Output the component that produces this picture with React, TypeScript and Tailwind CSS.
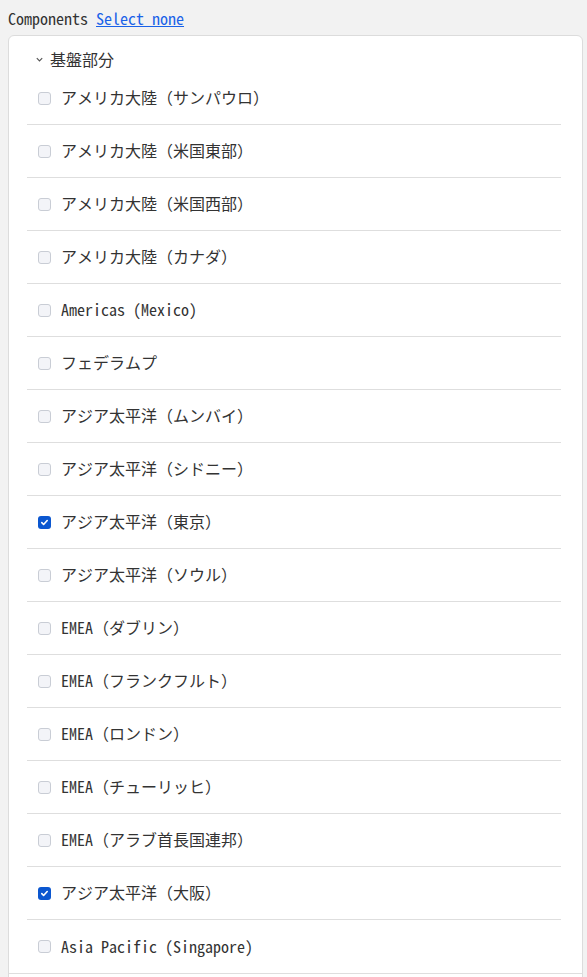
import { FC, JSX } from 'react';

const regions: { label: string; checked: boolean }[] = [
  { label: 'アメリカ大陸（サンパウロ）', checked: false },
  { label: 'アメリカ大陸（米国東部）', checked: false },
  { label: 'アメリカ大陸（米国西部）', checked: false },
  { label: 'アメリカ大陸（カナダ）', checked: false },
  { label: 'Americas (Mexico)', checked: false },
  { label: 'フェデラムプ', checked: false },
  { label: 'アジア太平洋（ムンバイ）', checked: false },
  { label: 'アジア太平洋（シドニー）', checked: false },
  { label: 'アジア太平洋（東京）', checked: true },
  { label: 'アジア太平洋（ソウル）', checked: false },
  { label: 'EMEA（ダブリン）', checked: false },
  { label: 'EMEA（フランクフルト）', checked: false },
  { label: 'EMEA（ロンドン）', checked: false },
  { label: 'EMEA（チューリッヒ）', checked: false },
  { label: 'EMEA（アラブ首長国連邦）', checked: false },
  { label: 'アジア太平洋（大阪）', checked: true },
  { label: 'Asia Pacific (Singapore)', checked: false },
];

const Box: FC<{ checked: boolean }> = ({ checked }): JSX.Element =>
  checked ? (
    <span className="flex h-[13px] w-[13px] shrink-0 items-center justify-center rounded-[3px] bg-[#0b57d0]">
      <svg width="9" height="9" viewBox="0 0 10 10" fill="none">
        <path d="M2 5.2l2 2 4-4.4" stroke="white" strokeWidth="1.8" strokeLinecap="round" strokeLinejoin="round" />
      </svg>
    </span>
  ) : (
    <span className="h-[13px] w-[13px] shrink-0 rounded-[3px] border border-[#c9cdd5] bg-[#f3f4f8]" />
  );

const App: FC = (): JSX.Element => {
  return (
    <div
      className="min-h-screen bg-[#f2f2f2] pl-2 pr-[4px] pt-[8px] text-[16px] text-[#333]"
      style={{ fontFamily: '"Noto Sans Mono CJK JP", "Noto Sans CJK JP", monospace' }}
    >
      <div className="flex h-[19px] items-center gap-2 leading-none">
        <span>Components</span>
        <a href="#" className="text-[#1a62e8] underline">Select none</a>
      </div>
      <div className="mt-[8px] rounded-t-md border border-[#dcdcdc] bg-white">
        <div className="flex h-[36px] items-start pl-[26px] pt-[11px]">
          <div className="flex h-[24px] items-center gap-[6px]">
            <svg width="9" height="9" viewBox="0 0 10 10" fill="none" className="text-[#555]">
              <path d="M2 3.5l3 3 3-3" stroke="currentColor" strokeWidth="1.3" />
            </svg>
            <span className="leading-none">基盤部分</span>
          </div>
        </div>
        <div className="pl-[18px] pr-[21px]">
          {regions.map((r, i) => (
            <div
              key={r.label}
              className={`flex h-[53px] items-center gap-[10px] pl-[11px] ${i < regions.length - 1 ? 'border-b border-[#dedede]' : ''}`}
            >
              <Box checked={r.checked} />
              <span className="-mt-[2px] leading-none">{r.label}</span>
            </div>
          ))}
        </div>
        <div className="h-[20px] border-t border-[#dedede]" />
      </div>
    </div>
  );
};

export default App;
